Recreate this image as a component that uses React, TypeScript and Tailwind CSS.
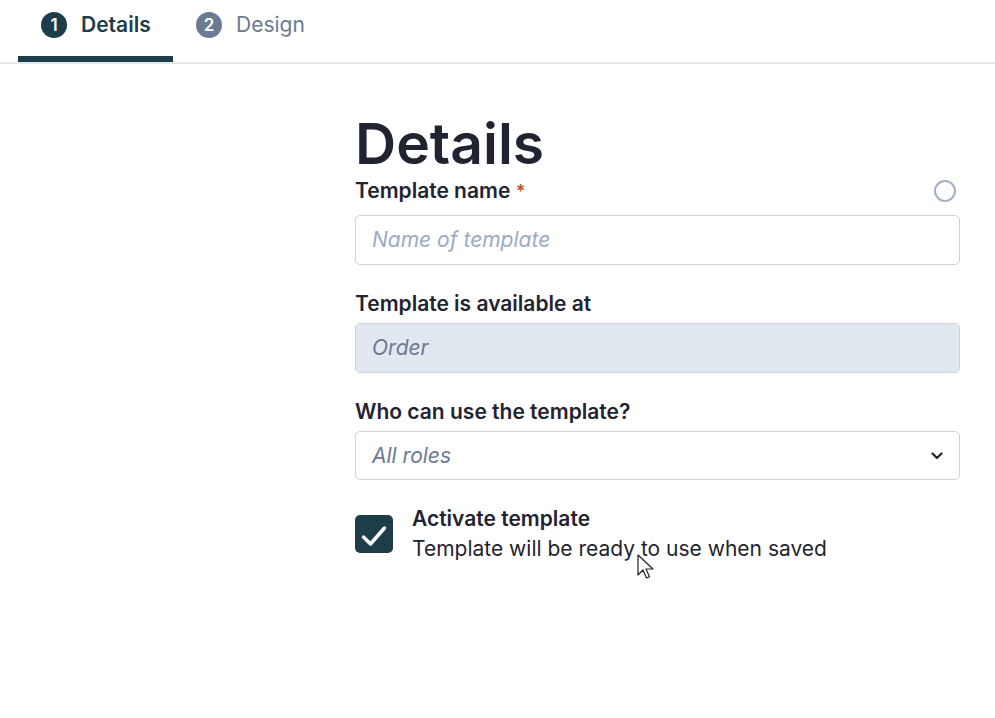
export default function App() {
  return (
    <div className="min-h-screen w-full bg-white text-[#1f2430] font-['Inter',sans-serif] relative">
      {/* tabs */}
      <div className="flex border-b-2 border-[#e6e6e6] h-[64px] pl-[18px]">
        <div className="flex items-start gap-[14px] pl-[23px] pt-[12px] w-[155px] border-b-[6px] border-[#1e3d4b] -mb-[2px] h-[62px]">
          <span className="w-[26px] h-[26px] rounded-full bg-[#1e3d4b] text-white flex items-center justify-center text-[17px] font-semibold leading-none">1</span>
          <span className="text-[21px] font-semibold text-[#1e3d4b] leading-[26px]">Details</span>
        </div>
        <div className="flex items-start gap-[14px] pl-[23px] pt-[12px]">
          <span className="w-[26px] h-[26px] rounded-full bg-[#6b7a92] text-white flex items-center justify-center text-[17px] font-semibold leading-none">2</span>
          <span className="text-[21px] text-[#6b7a92] leading-[26px]">Design</span>
        </div>
      </div>

      {/* form */}
      <div className="ml-[355px] w-[605px] pt-[47px]">
        <h1 className="text-[57px] font-semibold leading-[66px] text-[#1f2430]">Details</h1>

        <div className="flex items-center justify-between h-[24px] mt-[2px]">
          <label className="text-[21px] font-semibold leading-[24px]">
            Template name <span className="text-[#c0562b] text-[18px]">*</span>
          </label>
          <span className="w-[22px] h-[22px] rounded-full border-[2.5px] border-[#a3b1c6] mr-[4px]" />
        </div>
        <div className="mt-[12px] h-[50px] rounded-[5px] border border-[#cbd2e0] flex items-center px-[16px] text-[21px] italic text-[#9aabc2]">
          Name of template
        </div>

        <label className="block mt-[27px] text-[21px] font-semibold leading-[24px]">Template is available at</label>
        <div className="mt-[7px] h-[50px] rounded-[5px] border border-[#cbd2e0] bg-[#e2e8f0] flex items-center px-[16px] text-[21px] italic text-[#6b7a92]">
          Order
        </div>

        <label className="block mt-[27px] text-[21px] font-semibold leading-[24px]">Who can use the template?</label>
        <div className="mt-[7px] h-[49px] rounded-[5px] border border-[#cbd2e0] flex items-center justify-between pl-[16px] pr-[16px] text-[21px] italic text-[#6b7a92]">
          <span>All roles</span>
          <svg width="12" height="8" viewBox="0 0 12 8" fill="none" stroke="#1f2430" strokeWidth="2.2" strokeLinecap="round" strokeLinejoin="round">
            <path d="M1.5 1.5L6 6L10.5 1.5" />
          </svg>
        </div>

        <div className="flex items-start gap-[19px] mt-[35px]">
          <span className="w-[38px] h-[38px] shrink-0 rounded-[5px] bg-[#1e3d4b]">
            <svg width="38" height="38" viewBox="0 0 38 38" fill="none" stroke="white" strokeWidth="3.5" strokeLinecap="round" strokeLinejoin="round">
              <path d="M8.5 22L15.5 29L29.5 13" />
            </svg>
          </span>
          <div className="-mt-[9px]">
            <div className="text-[21px] font-semibold leading-[26px]">Activate template</div>
            <div className="text-[21px] leading-[34px] text-[#1f2430]">Template will be ready to use when saved</div>
          </div>
        </div>
      </div>

      {/* mouse cursor */}
      <svg className="absolute left-[637px] top-[554px]" width="20" height="28" viewBox="0 0 20 28">
        <path d="M1 1 L1 21 L6 16 L9.5 24 L12.5 22.7 L9 15 L16 15 Z" fill="white" stroke="#222" strokeWidth="1.2" strokeLinejoin="round" />
      </svg>
    </div>
  );
}
